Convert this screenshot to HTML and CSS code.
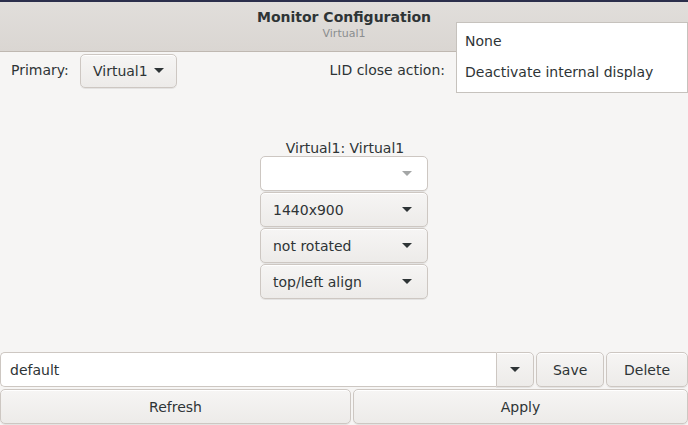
FILE: index.html
```html
<!DOCTYPE html>
<html>
<head>
<meta charset="utf-8">
<link rel="stylesheet" href="styles.css">
</head>
<body>
<div class="window">
  <header class="titlebar">
    <div class="title">Monitor Configuration</div>
    <div class="subtitle">Virtual1</div>
  </header>
  <div class="toolbar">
    <span class="label">Primary:</span>
    <button class="btn primary-btn">Virtual1 <span class="arrow"></span></button>
    <span class="spacer"></span>
    <span class="label lid">LID close action:</span>
  </div>
  <div class="center">
    <div class="monitor">
      <div class="mon-label">Virtual1: Virtual1</div>
      <div class="combo combo-empty"><span></span><span class="arrow light"></span></div>
      <div class="combo"><span>1440x900</span><span class="arrow"></span></div>
      <div class="combo"><span>not rotated</span><span class="arrow"></span></div>
      <div class="combo"><span>top/left align</span><span class="arrow"></span></div>
    </div>
  </div>
  <div class="bottom">
    <div class="row1">
      <div class="entry">default</div>
      <div class="btn entry-arrow"><span class="arrow"></span></div>
      <div class="btn save">Save</div>
      <div class="btn delete">Delete</div>
    </div>
    <div class="row2">
      <div class="btn refresh">Refresh</div>
      <div class="btn apply">Apply</div>
    </div>
  </div>
  <div class="menu">
    <div class="menu-item">None</div>
    <div class="menu-item">Deactivate internal display</div>
  </div>
</div>
</body>
</html>
```
FILE: styles.css
```css
* { box-sizing: border-box; }
html, body {
  margin: 0;
  padding: 0;
  width: 688px;
  height: 425px;
  overflow: hidden;
}
body {
  font-family: "DejaVu Sans", sans-serif;
  font-size: 14px;
  color: #2e3436;
  background: #f6f5f4;
}
.window {
  position: relative;
  width: 688px;
  height: 425px;
  display: flex;
  flex-direction: column;
  background: #f6f5f4;
}
.titlebar {
  height: 52px;
  border-top: 2px solid #2b2f4c;
  background: linear-gradient(#e1dedb, #dad6d2);
  border-bottom: 1px solid #bfb8b1;
  display: flex;
  flex-direction: column;
  align-items: center;
  padding-top: 7px;
}
.title {
  font-weight: bold;
  font-size: 14px;
  line-height: 17px;
  color: #2e3436;
}
.subtitle {
  font-size: 11px;
  line-height: 14px;
  margin-top: 1px;
  color: #8b8e8f;
}
.toolbar {
  display: flex;
  align-items: center;
  padding: 1px 0 0 11px;
  height: 36px;
}
.label { line-height: 17px; }
.primary-btn {
  margin-left: 11px;
  width: 97px;
  height: 34px;
  padding: 0 12px;
  justify-content: flex-start;
  gap: 6px;
}
.spacer { flex: 1; }
.lid { margin-right: 243px; }
.btn {
  display: flex;
  align-items: center;
  justify-content: center;
  font-family: inherit;
  font-size: 14px;
  color: #2e3436;
  border: 1px solid #cdc7c2;
  border-radius: 5px;
  background: linear-gradient(#f6f5f4, #edebe9);
  box-shadow: inset 0 1px #ffffff, 0 1px rgba(0,0,0,0.07);
}
.arrow {
  display: inline-block;
  width: 0;
  height: 0;
  border-left: 5px solid transparent;
  border-right: 5px solid transparent;
  border-top: 5px solid #2e3436;
}
.arrow.light { border-top-color: #a4a6a6; }
.center {
  flex: 1;
  display: flex;
  justify-content: center;
  padding-top: 51px;
}
.monitor {
  display: flex;
  flex-direction: column;
  align-items: center;
  gap: 1px;
}
.mon-label {
  line-height: 19px;
  margin-bottom: -3px;
  margin-left: 2px;
}
.combo {
  width: 168px;
  height: 35px;
  display: flex;
  align-items: center;
  justify-content: space-between;
  padding: 0 15px 0 12px;
  border: 1px solid #cdc7c2;
  border-radius: 5px;
  background: linear-gradient(#f6f5f4, #edebe9);
  box-shadow: inset 0 1px #ffffff, 0 1px rgba(0,0,0,0.07);
}
.combo-empty {
  background: #ffffff;
}
.bottom {
  display: flex;
  flex-direction: column;
  gap: 2px;
  padding-bottom: 1px;
}
.row1 {
  display: flex;
  height: 35px;
}
.entry {
  width: 497px;
  height: 35px;
  display: flex;
  align-items: center;
  padding-left: 9px;
  background: #ffffff;
  border: 1px solid #cdc7c2;
  border-right: none;
  border-radius: 5px 0 0 5px;
}
.entry-arrow {
  width: 38px;
  height: 35px;
  border-radius: 0 5px 5px 0;
}
.save {
  width: 68px;
  height: 35px;
  margin-left: 2px;
}
.delete {
  width: 82px;
  height: 35px;
  margin-left: 2px;
}
.row2 {
  display: flex;
  gap: 2px;
  height: 35px;
}
.refresh {
  width: 351px;
  height: 35px;
}
.apply {
  flex: 1;
  height: 35px;
}
.menu {
  position: absolute;
  left: 456px;
  top: 22px;
  width: 232px;
  height: 71px;
  background: #ffffff;
  border: 1px solid #c6c2bd;
  padding-top: 3px;
}
.menu-item {
  height: 31px;
  line-height: 31px;
  padding-left: 8px;
}
```
